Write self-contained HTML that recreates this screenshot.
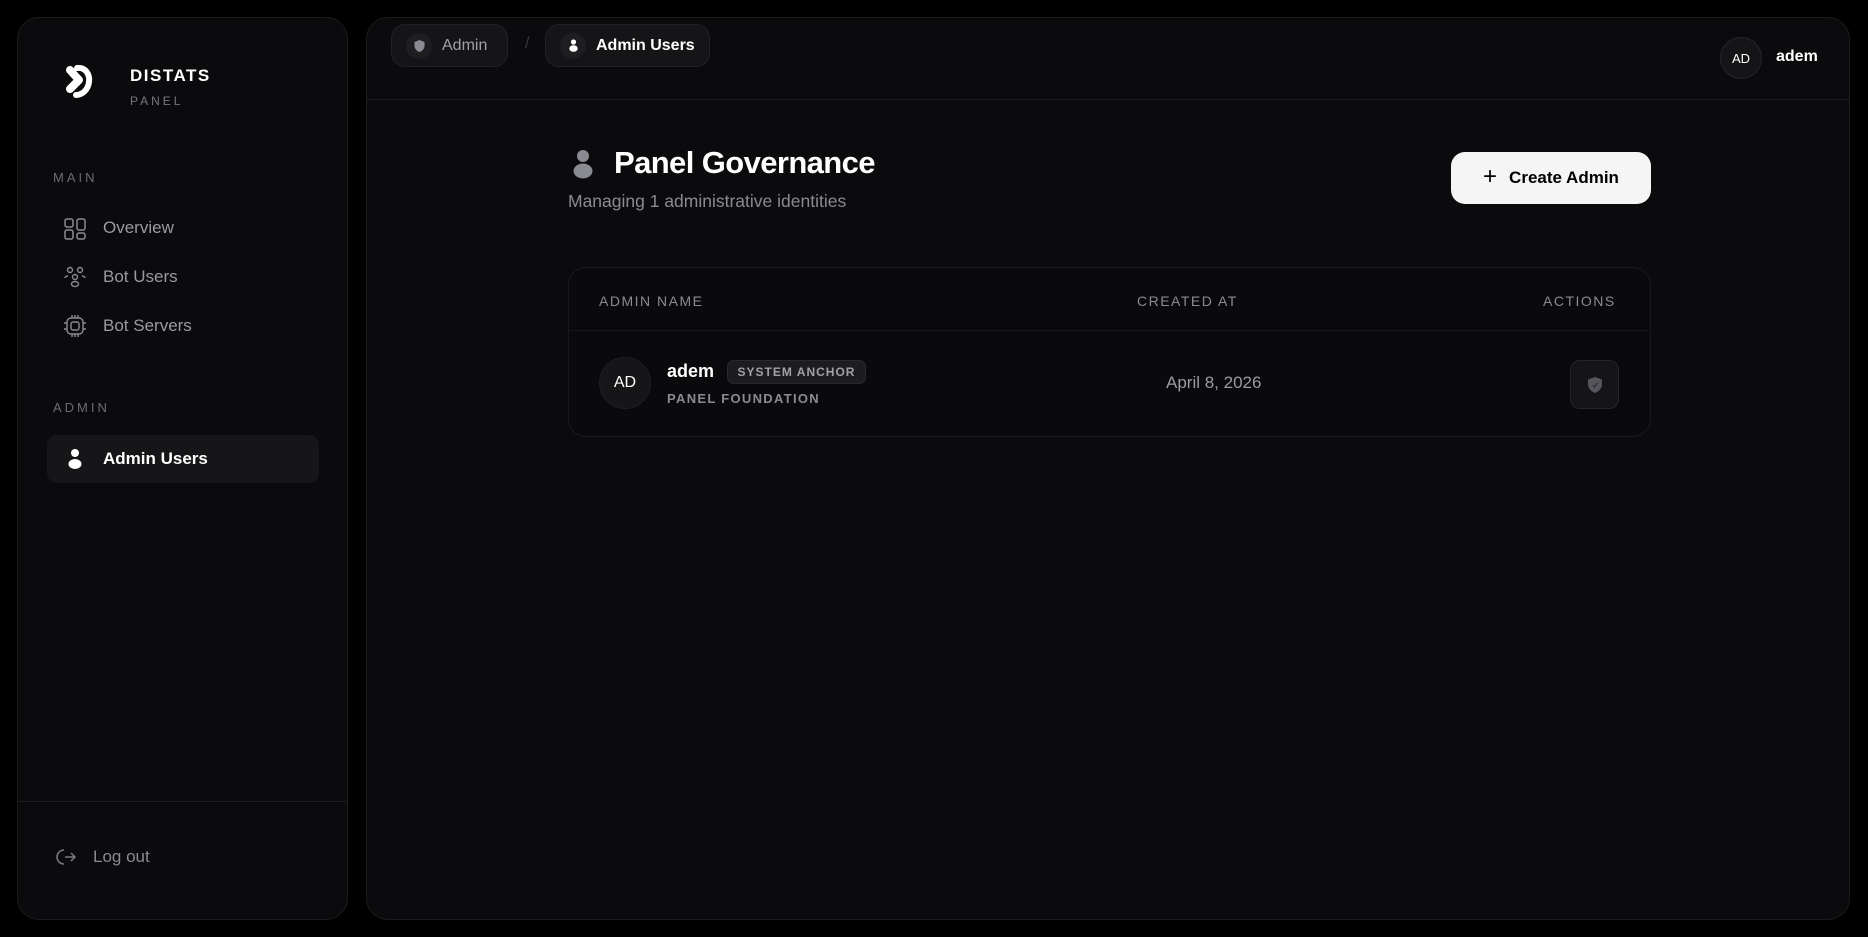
<!DOCTYPE html>
<html><head><meta charset="utf-8"><style>
*{box-sizing:border-box;margin:0;padding:0}
body{width:1868px;height:937px;background:#000;font-family:"Liberation Sans",sans-serif;position:relative;overflow:hidden;color:#fff}
.side{position:absolute;left:17px;top:17px;width:331px;height:903px;background:#0b0b0d;border:1px solid #1c1c1f;border-radius:22px}
.main{position:absolute;left:366px;top:17px;width:1484px;height:903px;background:#0b0b0d;border:1px solid #1c1c1f;border-radius:22px}
.abs{position:absolute}
.lbl{font-size:13px;letter-spacing:3px;color:#6b6b72}
.nav{font-size:17px;color:#9a9aa2}
.pill{position:absolute;top:6px;height:43px;border-radius:14px;background:#151517;border:1px solid #222226;display:flex;align-items:center;font-size:16px}
.ic{width:26px;height:26px;border-radius:50%;background:#1e1e21;display:flex;align-items:center;justify-content:center;margin:0 10px 0 14px}
</style></head><body>
<div class="side">
  <div class="abs" style="left:112px;top:48px;font-size:17px;font-weight:bold;letter-spacing:1.5px">DISTATS</div>
  <div class="abs" style="left:112px;top:76px;font-size:12px;letter-spacing:3px;color:#77777e">PANEL</div>
  <div class="abs lbl" style="left:35px;top:152px">MAIN</div>
  <svg class="abs" style="left:46px;top:200px" width="22" height="22" viewBox="0 0 22 22" fill="none" stroke="#8a8a92" stroke-width="1.5"><rect x="1" y="1" width="8" height="8" rx="2"/><rect x="13" y="1" width="8" height="11" rx="2"/><rect x="1" y="12" width="8" height="9" rx="2"/><rect x="13" y="15" width="8" height="6" rx="2"/></svg>
  <div class="abs nav" style="left:85px;top:200px">Overview</div>
  <svg class="abs" style="left:46px;top:248px" width="22" height="22" viewBox="0 0 22 22" fill="none" stroke="#8a8a92" stroke-width="1.4"><circle cx="6" cy="4" r="2.5"/><circle cx="16" cy="4" r="2.5"/><circle cx="11" cy="11" r="2.5"/><ellipse cx="11" cy="18" rx="3.5" ry="2.5"/><path d="M4 10c-2 0-3 1-3 2M18 10c2 0 3 1 3 2"/></svg>
  <div class="abs nav" style="left:85px;top:249px">Bot Users</div>
  <svg class="abs" style="left:46px;top:297px" width="22" height="22" viewBox="0 0 22 22" fill="none" stroke="#8a8a92" stroke-width="1.4"><rect x="3" y="3" width="16" height="16" rx="4"/><rect x="7" y="7" width="8" height="8" rx="2"/><path d="M8 0v3M11 0v3M14 0v3M8 19v3M11 19v3M14 19v3M0 8h3M0 14h3M19 8h3M19 14h3"/></svg>
  <div class="abs nav" style="left:85px;top:298px">Bot Servers</div>
  <div class="abs lbl" style="left:35px;top:382px">ADMIN</div>
  <div class="abs" style="left:29px;top:417px;width:272px;height:48px;background:#161618;border-radius:10px"></div>
  <svg class="abs" style="left:50px;top:430px" width="14" height="22" viewBox="0 0 14 22" fill="#fff"><circle cx="7" cy="5" r="4"/><ellipse cx="7" cy="16" rx="6.5" ry="5"/></svg>
  <div class="abs" style="left:85px;top:431px;font-size:17px;font-weight:bold">Admin Users</div>
  <div class="abs" style="left:0;top:783px;width:329px;height:1px;background:#1c1c1f"></div>
  <svg class="abs" style="left:38px;top:829px" width="20" height="20" viewBox="0 0 20 20" fill="none" stroke="#7a7a82" stroke-width="1.5"><path d="M8 3a7 7 0 1 0 0 14"/><path d="M9 10h10M15 6l4 4-4 4"/></svg>
  <div class="abs nav" style="left:75px;top:829px;color:#8a8a92">Log out</div>
</div>
<svg class="abs" style="left:55px;top:55px;z-index:5" width="50" height="50" viewBox="0 0 50 50"><path d="M15 15L24 25L15 34" stroke="#fff" stroke-width="8" stroke-linecap="round" stroke-linejoin="round" fill="none"/><path d="M22 13C31 12 35 20 34 27C33 35 27 40 21 40" stroke="#fff" stroke-width="6" stroke-linecap="round" fill="none"/></svg>
<div class="main">
  <div class="pill" style="left:24px;width:117px"><div class="ic"><svg width="11" height="12" viewBox="0 0 11 12"><path d="M5.5 0l5 2v4c0 3-2.5 5-5 6-2.5-1-5-3-5-6V2z" fill="#8a8a92"/></svg></div><span style="color:#a0a0a8">Admin</span></div>
  <div class="abs" style="left:158px;top:17px;color:#3a3a3f;font-size:16px">/</div>
  <div class="pill" style="left:178px;width:165px"><div class="ic"><svg width="9" height="13" viewBox="0 0 9 13" fill="#fff"><circle cx="4.5" cy="3" r="2.6"/><ellipse cx="4.5" cy="9.5" rx="4.2" ry="3.3"/></svg></div><span style="font-weight:bold;color:#fff">Admin Users</span></div>
  <div class="abs" style="left:1353px;top:19px;width:42px;height:42px;border-radius:50%;background:#151517;border:1px solid #262629;display:flex;align-items:center;justify-content:center;font-size:13px">AD</div>
  <div class="abs" style="left:1409px;top:30px;font-size:16px;font-weight:bold">adem</div>
  <div class="abs" style="left:0;top:81px;width:1482px;height:1px;background:#1c1c1f"></div>

  <svg class="abs" style="left:206px;top:131px" width="20" height="30" viewBox="0 0 20 30" fill="#8a8a92"><circle cx="10" cy="7" r="6"/><ellipse cx="10" cy="22" rx="9.5" ry="7.5"/></svg>
  <div class="abs" style="left:247px;top:127px;font-size:31px;font-weight:bold;letter-spacing:-0.6px">Panel Governance</div>
  <div class="abs" style="left:201px;top:173px;font-size:17.5px;color:#8a8a92">Managing 1 administrative identities</div>
  <div class="abs" style="left:1084px;top:134px;width:200px;height:52px;background:#f5f5f5;border-radius:14px;display:flex;align-items:center;justify-content:center;color:#000;font-size:17px;font-weight:bold"><span style="font-weight:normal;font-size:24px;margin-right:12px;margin-top:-3px">+</span>Create Admin</div>

  <div class="abs" style="left:201px;top:249px;width:1083px;height:170px;border:1px solid #1a1a1d;border-radius:18px;background:#0a0a0c"></div>
  <div class="abs" style="left:201px;top:312px;width:1083px;height:1px;background:#17171a"></div>
  <div class="abs lbl" style="left:232px;top:275px;font-size:14px;letter-spacing:1.5px;color:#8a8a92">ADMIN NAME</div>
  <div class="abs lbl" style="left:770px;top:275px;font-size:14px;letter-spacing:1.5px;color:#8a8a92">CREATED AT</div>
  <div class="abs lbl" style="left:1176px;top:275px;font-size:14px;letter-spacing:1.5px;color:#8a8a92">ACTIONS</div>
  <div class="abs" style="left:232px;top:339px;width:52px;height:52px;border-radius:50%;background:#161618;border:1px solid #1f1f22;display:flex;align-items:center;justify-content:center;font-size:16px">AD</div>
  <div class="abs" style="left:300px;top:343px;font-size:18px;font-weight:bold">adem</div>
  <div class="abs" style="left:360px;top:342px;width:139px;height:24px;border-radius:7px;background:#1d1d20;border:1px solid #2a2a2e;font-size:12px;font-weight:bold;letter-spacing:1px;color:#a0a0a8;display:flex;align-items:center;justify-content:center">SYSTEM ANCHOR</div>
  <div class="abs" style="left:300px;top:373px;font-size:13px;font-weight:bold;letter-spacing:1.3px;color:#8a8a92">PANEL FOUNDATION</div>
  <div class="abs" style="left:799px;top:355px;font-size:17px;color:#9a9aa2">April 8, 2026</div>
  <div class="abs" style="left:1203px;top:342px;width:49px;height:49px;border-radius:10px;background:#151517;border:1px solid #262629;display:flex;align-items:center;justify-content:center"><svg width="14" height="16" viewBox="0 0 14 16"><path d="M7 0l7 2.5v5c0 4-3.5 7-7 8.5C3.5 14.5 0 11.5 0 7.5v-5z" fill="#55555c"/><path d="M4.5 8l2 2 3-4" stroke="#2a2a2e" stroke-width="1.2" fill="none"/></svg></div>
</div>
</body></html>
